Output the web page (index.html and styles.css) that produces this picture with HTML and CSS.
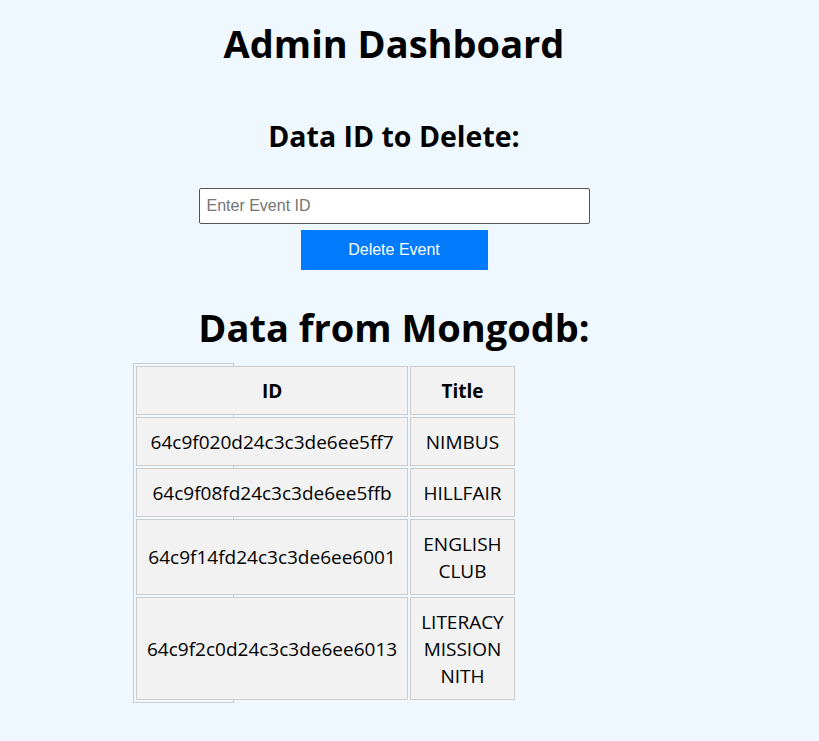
FILE: index.html
```html
<!DOCTYPE html>
<html lang="en">
<head>
<meta charset="utf-8">
<title>Admin Dashboard</title>
<link rel="stylesheet" href="styles.css">
</head>
<body>
<main class="page">
  <h1 class="title">Admin Dashboard</h1>
  <section class="delete">
    <h2 class="subtitle">Data ID to Delete:</h2>
    <input class="id-input" type="text" placeholder="Enter Event ID">
    <button class="delete-btn" type="button">Delete Event</button>
  </section>
  <h1 class="title title-data">Data from Mongodb:</h1>
  <div class="table-wrap">
    <table class="data-table">
      <thead>
        <tr><th>ID</th><th>Title</th></tr>
      </thead>
      <tbody>
        <tr><td>64c9f020d24c3c3de6ee5ff7</td><td>NIMBUS</td></tr>
        <tr><td>64c9f08fd24c3c3de6ee5ffb</td><td>HILLFAIR</td></tr>
        <tr><td>64c9f14fd24c3c3de6ee6001</td><td>ENGLISH CLUB</td></tr>
        <tr><td>64c9f2c0d24c3c3de6ee6013</td><td>LITERACY MISSION NITH</td></tr>
      </tbody>
    </table>
  </div>
</main>
</body>
</html>
```
FILE: styles.css
```css
html, body {
  margin: 0;
  padding: 0;
}
body {
  background: #f0f8ff;
  font-family: "Open Sans", "Noto Sans", sans-serif;
  color: #000;
}
.page {
  width: 522px;
  margin-left: 133px;
  display: flex;
  flex-direction: column;
  align-items: center;
}
.title {
  margin: 19px 0 0;
  font-size: 38px;
  line-height: 1.3;
  font-weight: 700;
  text-align: center;
}
.delete {
  display: flex;
  flex-direction: column;
  align-items: center;
  margin-top: 51px;
}
.subtitle {
  margin: 0;
  font-size: 28.5px;
  line-height: 35px;
  font-weight: 700;
}
.id-input {
  margin-top: 34px;
  width: 391px;
  height: 36px;
  box-sizing: border-box;
  border: 1px solid #555;
  border-radius: 2px;
  padding: 0 7px;
  font-family: "Liberation Sans", Arial, sans-serif;
  font-size: 16px;
  background: #fff;
}
.id-input::placeholder {
  color: #757575;
}
.delete-btn {
  margin-top: 6px;
  width: 187px;
  height: 40px;
  border: none;
  border-radius: 0;
  background: #007bff;
  color: #fff;
  font-family: "Liberation Sans", Arial, sans-serif;
  font-size: 16px;
}
.title-data {
  margin-top: 33px;
}
.table-wrap {
  align-self: flex-start;
  width: 99px;
  border: 1px solid #ccc;
  margin-top: 10px;
}
.data-table {
  border-spacing: 2px;
  font-size: 19px;
}
.data-table th,
.data-table td {
  background: #f2f2f2;
  border: 1px solid #ccc;
  padding: 11px 10px 9px;
  line-height: 27px;
  text-align: center;
}
.data-table th {
  font-weight: 700;
}
```
